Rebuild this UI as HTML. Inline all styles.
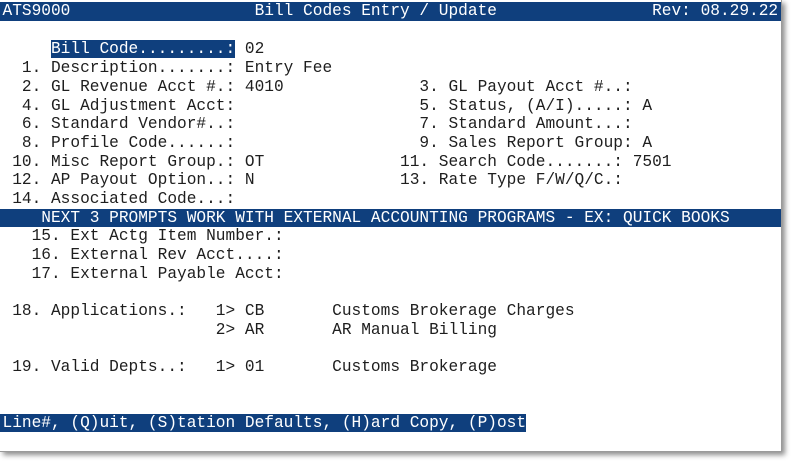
<!DOCTYPE html>
<html><head><meta charset="utf-8"><style>
html,body{margin:0;padding:0;background:#fff;width:792px;height:462px;overflow:hidden}
#scr{position:absolute;left:0;top:0;width:781px;height:451px;background:#fff;border-right:1px solid #9a9a9a;border-bottom:1px solid #9a9a9a;box-shadow:3px 3px 5px rgba(0,0,0,0.45)}
.r{position:absolute;left:2.5px;height:18.7px;line-height:18.7px;font-family:"Liberation Mono",monospace;font-size:16.17px;white-space:pre;color:#1e1e1e}
.bar{background:#0f3f7d;color:#fff}
.full{left:0;width:781px;padding-left:2.5px;box-sizing:border-box}
</style></head><body><div id="scr">
<div class="r bar full" style="top:2px;height:19px">ATS9000                   Bill Codes Entry / Update                Rev: 08.29.22</div>
<div class="r" style="top:40.4px">     <span class="bar">Bill Code.........:</span> 02</div>
<div class="r" style="top:59.1px">  1. Description.......: Entry Fee</div>
<div class="r" style="top:77.8px">  2. GL Revenue Acct #.: 4010              3. GL Payout Acct #..:</div>
<div class="r" style="top:96.5px">  4. GL Adjustment Acct:                   5. Status, (A/I).....: A</div>
<div class="r" style="top:115.2px">  6. Standard Vendor#..:                   7. Standard Amount...:</div>
<div class="r" style="top:133.9px">  8. Profile Code......:                   9. Sales Report Group: A</div>
<div class="r" style="top:152.6px"> 10. Misc Report Group.: OT              11. Search Code.......: 7501</div>
<div class="r" style="top:171.3px"> 12. AP Payout Option..: N               13. Rate Type F/W/Q/C.:</div>
<div class="r" style="top:190px"> 14. Associated Code...:</div>
<div class="r bar full" style="top:208.7px">    NEXT 3 PROMPTS WORK WITH EXTERNAL ACCOUNTING PROGRAMS - EX: QUICK BOOKS</div>
<div class="r" style="top:227.4px">   15. Ext Actg Item Number.:</div>
<div class="r" style="top:246.1px">   16. External Rev Acct....:</div>
<div class="r" style="top:264.8px">   17. External Payable Acct:</div>
<div class="r" style="top:302.2px"> 18. Applications.:   1> CB       Customs Brokerage Charges</div>
<div class="r" style="top:320.9px">                      2> AR       AR Manual Billing</div>
<div class="r" style="top:358.3px"> 19. Valid Depts..:   1> 01       Customs Brokerage</div>
<div class="r" style="top:414.4px;left:0;padding-left:2.5px"><span class="bar" style="margin-left:-2.5px;padding-left:2.5px">Line#, (Q)uit, (S)tation Defaults, (H)ard Copy, (P)ost</span></div>
</div></body></html>
